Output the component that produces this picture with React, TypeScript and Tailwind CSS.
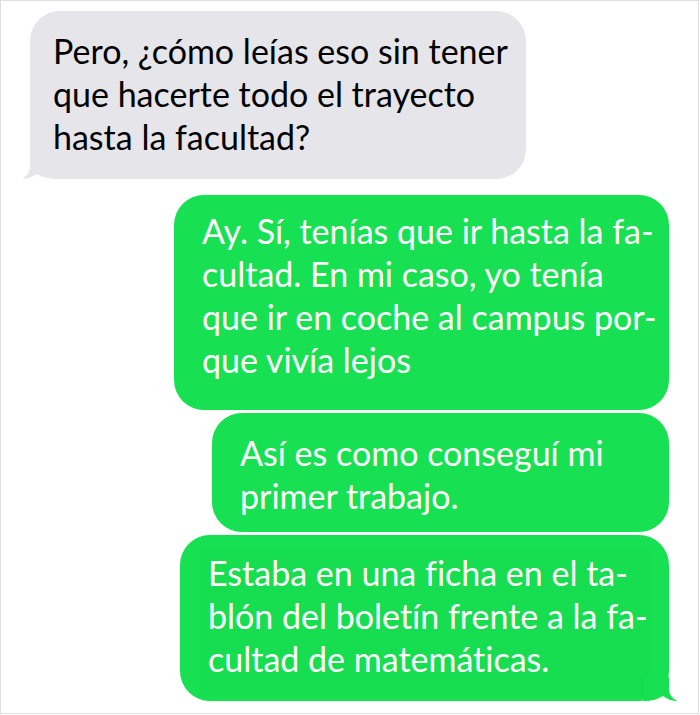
const font = { fontFamily: 'Lato, "Noto Sans", sans-serif' }

function Lines({ lines }: { lines: string[] }) {
  return (
    <>
      {lines.map((l, i) => (
        <span key={i} className="block whitespace-nowrap">
          {l}
        </span>
      ))}
    </>
  )
}

export default function App() {
  return (
    <div className="h-[715px] w-[700px] bg-white">
      <div
        className="flex h-[714px] w-[699px] flex-col border border-[#dedede] text-[34px] leading-[43px] [font-variant-ligatures:none]"
        style={font}
      >
        {/* incoming */}
        <div className="relative ml-[29px] mt-[10px] w-[496px] self-start rounded-[30px] bg-[#e5e5ea] pb-[21px] pl-[23px] pt-[18px] text-black">
          <Lines lines={['Pero, ¿cómo leías eso sin tener', 'que hacerte todo el trayecto', 'hasta la facultad?']} />
          <svg className="absolute -left-[8px] bottom-0 h-[30px] w-[40px]" viewBox="0 0 40 30">
            <path d="M8 0 L8 17 C8 23 5 27 0 30 C6 30 11 27 15 25 C21 29 28 30 40 30 L40 0 Z" fill="#e5e5ea" />
          </svg>
        </div>

        {/* outgoing */}
        <div className="mr-[29px] mt-[16px] w-[495px] self-end rounded-[30px] bg-[#17e152] pb-[29px] pl-[28px] pt-[14px] text-white">
          <Lines
            lines={[
              'Ay. Sí, tenías que ir hasta la fa-',
              'cultad. En mi caso, yo tenía',
              'que ir en coche al campus por-',
              'que vivía lejos',
            ]}
          />
        </div>

        <div className="mr-[29px] mt-[3px] w-[457px] self-end rounded-[30px] bg-[#17e152] pb-[15px] pl-[28px] pt-[18px] text-white">
          <Lines lines={['Así es como conseguí mi', 'primer trabajo.']} />
        </div>

        <div className="relative mr-[29px] mt-[3px] w-[489px] self-end rounded-[30px] bg-[#17e152] pb-[4px] pl-[19px] pr-[19px] pt-[15px] text-white">
          <div className="rounded-[4px] bg-[#16de50] pb-[17px] pl-[9px] pt-[1px]">
            <Lines
              lines={[
                'Estaba en una ficha en el ta-',
                'blón del boletín frente a la fa-',
                'cultad de matemáticas.',
              ]}
            />
          </div>
          <svg className="absolute -right-[9px] bottom-0 h-[24px] w-[34px]" viewBox="0 0 34 24">
            <path d="M25 0 L25 12 C25 18 29 22 34 24 C28 24 23 22 19 19 C14 22 8 24 0 24 L0 0 Z" fill="#17e152" />
          </svg>
        </div>
      </div>
    </div>
  )
}
